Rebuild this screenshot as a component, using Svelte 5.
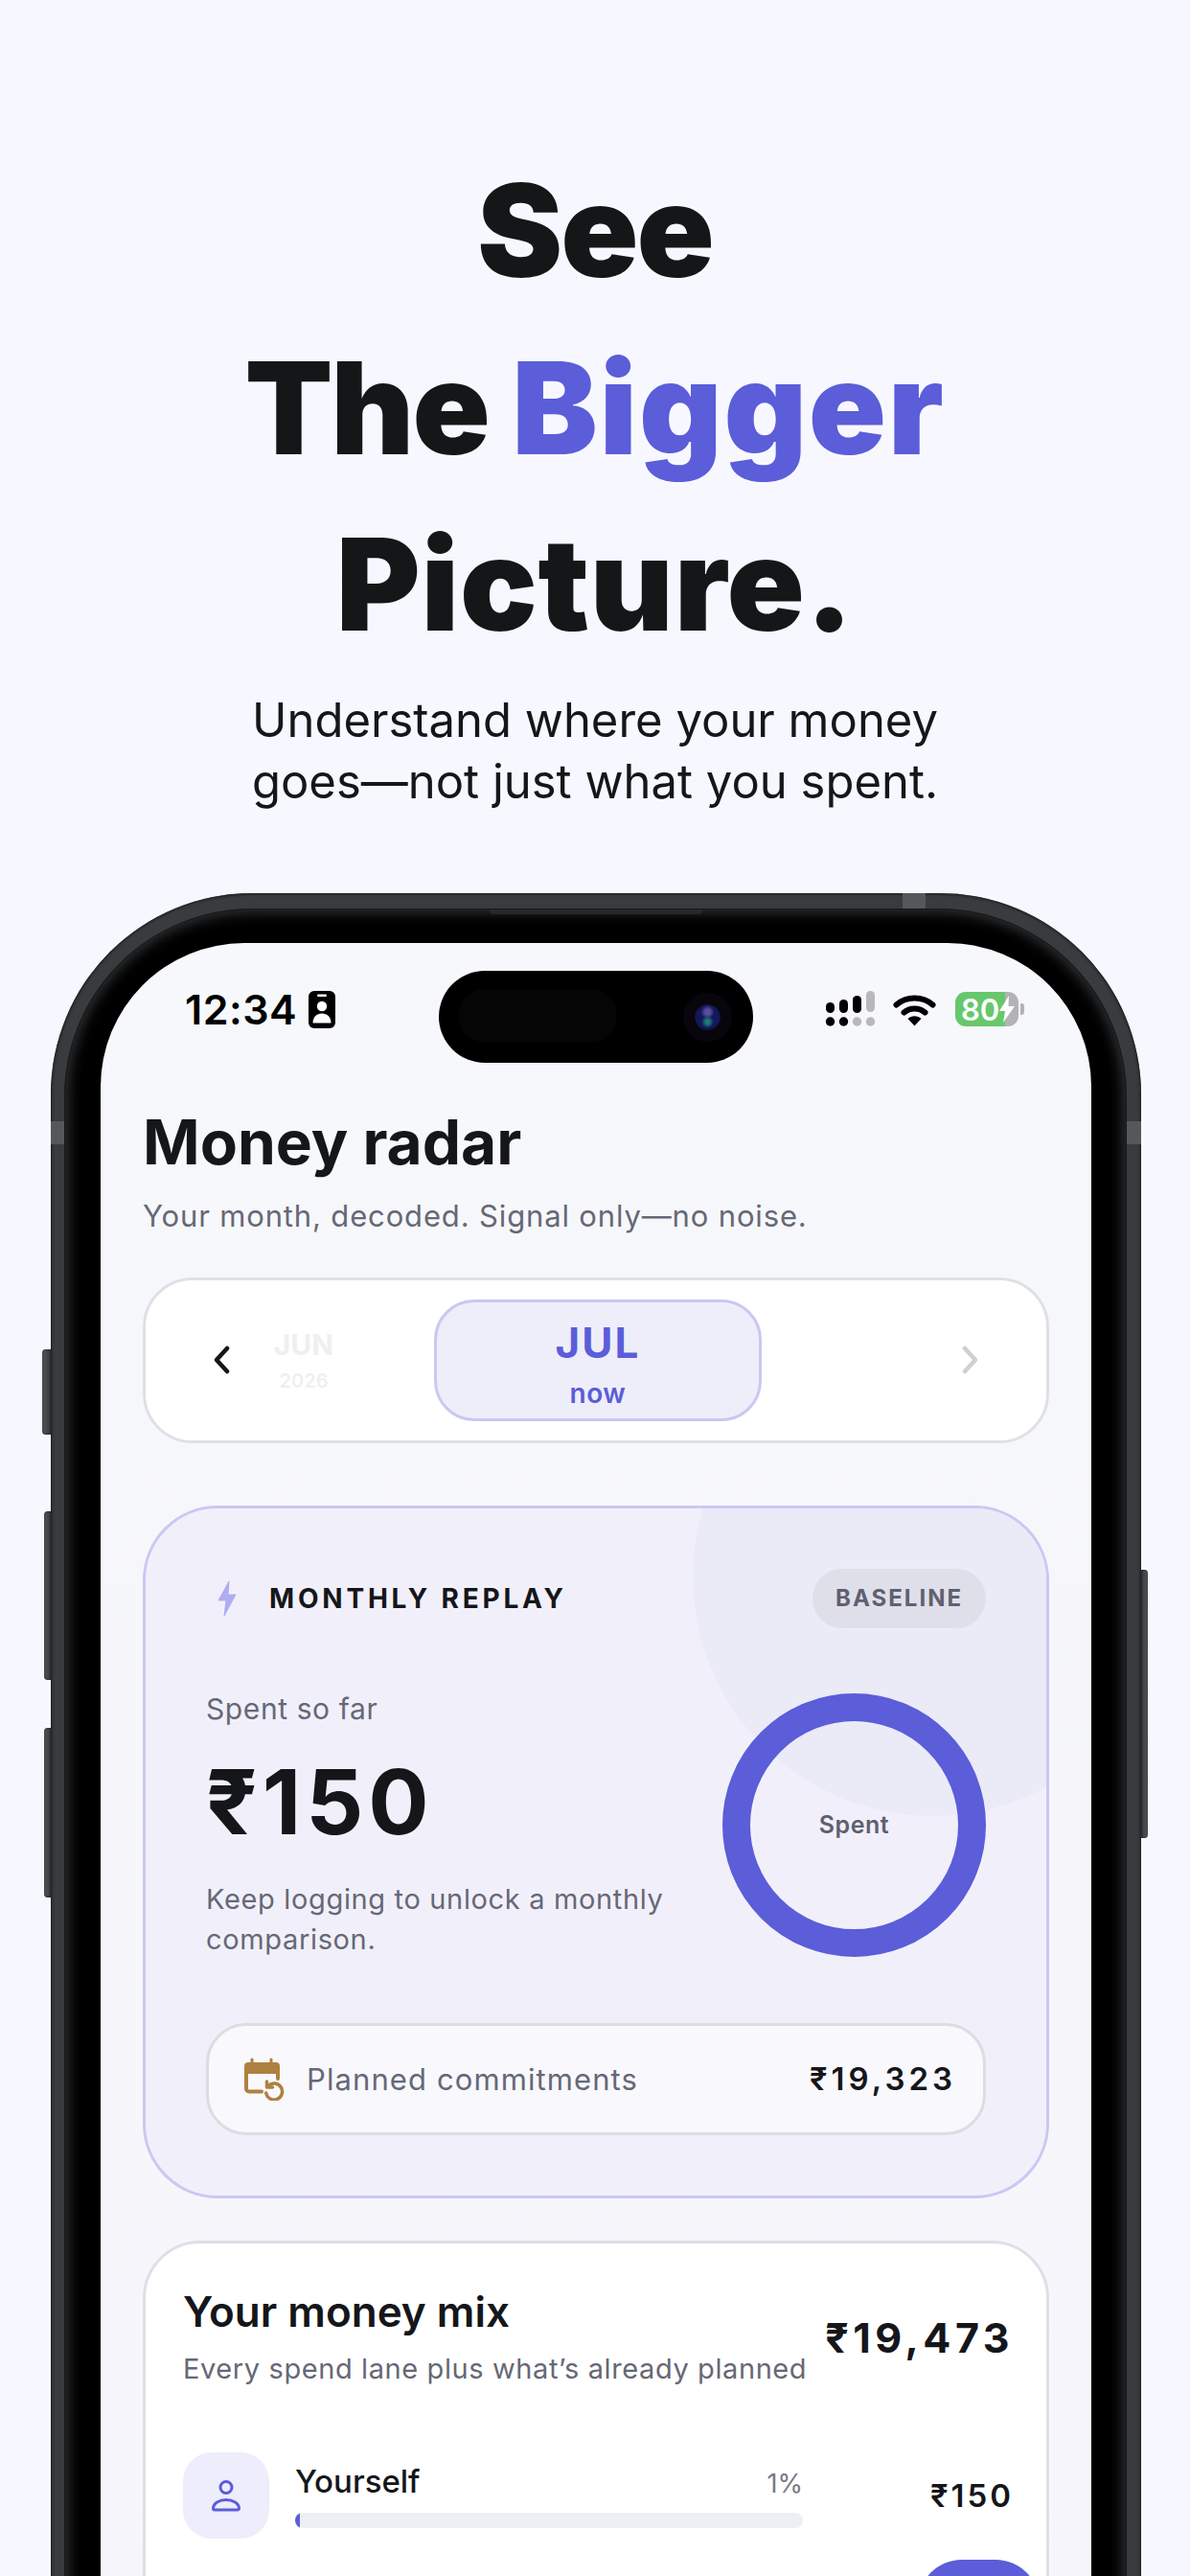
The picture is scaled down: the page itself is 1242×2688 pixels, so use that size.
<script lang="ts">
  const mix = [{ name: "Yourself", pct: 1, amount: "₹150" }];
</script>

<div class="page">
  <header class="hero">
    <h1>See<br />The <span class="accent">Bigger</span><br /><span class="last">Picture.</span></h1>
    <p>Understand where your money<br />goes—not just what you spent.</p>
  </header>

  <div class="phone">
    <span class="btn action"></span>
    <span class="btn vol-up"></span>
    <span class="btn vol-down"></span>
    <span class="btn power"></span>
    <span class="band band-l"></span>
    <span class="band band-r"></span>
    <span class="band-top"></span>
    <div class="bezel">
      <span class="speaker"></span>
      <div class="screen">
        <div class="island">
          <span class="island-sensor"></span>
          <span class="island-cam"></span>
        </div>

        <div class="status">
          <div class="status-left">
            <span class="time">12:34</span>
            <svg class="badge" viewBox="0 0 28 39" width="28" height="39" aria-hidden="true">
              <rect width="28" height="39" rx="6" fill="#000" />
              <rect x="9" y="3.500" width="10" height="2.400" rx="1.200" fill="#fff" />
              <circle cx="14" cy="16" r="5.200" fill="#fff" />
              <path d="M4.500 33.500c0-6.500 4.200-10 9.500-10s9.500 3.500 9.500 10z" fill="#fff" />
            </svg>
          </div>
          <div class="status-right">
            <svg width="55" height="38" viewBox="0 0 55 38" aria-hidden="true">
              <rect x="2" y="12" width="9" height="11" rx="4.500" />
              <rect x="16" y="9" width="9" height="14" rx="4.500" />
              <rect x="30" y="5" width="9" height="18" rx="4.500" />
              <rect x="44" y="0" width="9" height="22" rx="4.500" fill="#b8b8bc" />
              <circle cx="6.500" cy="32" r="4.700" />
              <circle cx="20.500" cy="32" r="4.700" />
              <circle cx="34.500" cy="32" r="4.700" fill="#b8b8bc" />
              <circle cx="48.500" cy="32" r="4.700" fill="#b8b8bc" />
            </svg>
            <svg class="wifi" width="45" height="35" viewBox="0 0 45 35" aria-hidden="true">
              <path d="M3.500 12.500C14 3 31 3 41.500 12.500" fill="none" stroke="#000" stroke-width="6" stroke-linecap="round" />
              <path d="M11.500 20.500C17.500 15 27.500 15 33.500 20.500" fill="none" stroke="#000" stroke-width="6" stroke-linecap="round" />
              <path d="M15.500 27c4-3.800 10-3.800 14 0l-7 7.500z" />
            </svg>
            <div class="battery">
              <div class="cell">
                <span>80</span>
                <svg width="16" height="28" viewBox="0 0 16 28" aria-hidden="true">
                  <path d="M10 0 0 16h6l-2 12L16 11H9.500z" fill="#fff" />
                </svg>
              </div>
              <span class="nub"></span>
            </div>
          </div>
        </div>

        <main class="content">
          <h2>Money radar</h2>
          <p class="lede">Your month, decoded. Signal only—no noise.</p>

          <div class="months">
            <svg class="chev" width="18" height="30" viewBox="0 0 18 30" aria-hidden="true">
              <path d="M15 3 4 15l11 12" fill="none" stroke="#15161a" stroke-width="4.500" stroke-linecap="round" stroke-linejoin="round" />
            </svg>
            <div class="month-prev">
              <span class="m">JUN</span>
              <span class="y">2026</span>
            </div>
            <div class="month-now">
              <span class="m">JUL</span>
              <span class="n">now</span>
            </div>
            <svg class="chev next" width="18" height="30" viewBox="0 0 18 30" aria-hidden="true">
              <path d="M3 3l11 12L3 27" fill="none" stroke="#cfd0d4" stroke-width="4.500" stroke-linecap="round" stroke-linejoin="round" />
            </svg>
          </div>

          <section class="replay">
            <span class="blob"></span>
            <div class="replay-head">
              <div class="replay-title">
                <svg width="22" height="38" viewBox="0 0 22 38" aria-hidden="true">
                  <path d="M13 1 2 21h8l-2 16 12-22h-8z" fill="#aeadf2" stroke="#aeadf2" stroke-width="1" stroke-linejoin="round" />
                </svg>
                <span>MONTHLY REPLAY</span>
              </div>
              <span class="pill">BASELINE</span>
            </div>
            <div class="replay-body">
              <div class="replay-copy">
                <div class="so-far">Spent so far</div>
                <div class="big">₹150</div>
                <p>Keep logging to unlock a monthly comparison.</p>
              </div>
              <div class="ring"><span>Spent</span></div>
            </div>
            <div class="planned">
              <svg width="42" height="45" viewBox="0 0 42 45" aria-hidden="true">
                <path d="M6.500 5V2a1.500 1.500 0 0 1 3 0v3h17V2a1.500 1.500 0 0 1 3 0v3H33a4 4 0 0 1 4 4v8H0V9a4 4 0 0 1 4-4z" fill="#ae8140" />
                <path d="M2 15v17.500a3 3 0 0 0 3 3h13M35 15v7" fill="none" stroke="#ae8140" stroke-width="4" stroke-linecap="round" />
                <path d="M25 29.500a8.500 8.500 0 1 1-2.300 7.500" fill="none" stroke="#ae8140" stroke-width="3.500" stroke-linecap="round" />
                <path d="M23.500 25v6h6" fill="none" stroke="#ae8140" stroke-width="3.500" stroke-linecap="round" stroke-linejoin="round" />
              </svg>
              <span class="planned-label">Planned commitments</span>
              <span class="planned-amount">₹19,323</span>
            </div>
          </section>

          <section class="mix">
            <div class="mix-head">
              <div>
                <h3>Your money mix</h3>
                <p>Every spend lane plus what’s already planned</p>
              </div>
              <span class="total">₹19,473</span>
            </div>
            {#each mix as row}
              <div class="lane">
                <div class="lane-icon">
                  <svg width="32" height="34" viewBox="0 0 32 34" aria-hidden="true">
                    <circle cx="16" cy="8.500" r="6" fill="none" stroke="#5b5dd9" stroke-width="3" />
                    <path d="M2.500 30.500C2.500 25 9 21.500 16 21.500s13.500 3.500 13.500 9a1.500 1.500 0 0 1-1.500 1.500H4a1.500 1.500 0 0 1-1.500-1.500z" fill="none" stroke="#5b5dd9" stroke-width="3" stroke-linejoin="round" />
                  </svg>
                </div>
                <div class="lane-main">
                  <div class="lane-top">
                    <span class="lane-name">{row.name}</span>
                    <span class="lane-pct">{row.pct}%</span>
                  </div>
                  <div class="track"><div class="fill" style="width: {row.pct}%"></div></div>
                </div>
                <span class="lane-amount">{row.amount}</span>
              </div>
            {/each}
            <span class="fab"></span>
          </section>
        </main>
      </div>
    </div>
  </div>
</div>

<style>
  :global(body) {
    margin: 0;
    background: #f7f8ff;
  }
  .page {
    width: 1242px;
    height: 2688px;
    overflow: hidden;
    background: #f7f8ff;
    font-family: Inter, "Noto Sans", sans-serif;
  }
  .hero {
    padding-top: 148px;
    text-align: center;
    color: #151618;
  }
  .hero h1 {
    margin: 0;
    font-size: 134px;
    line-height: 184.5px;
    font-weight: 900;
    letter-spacing: -2px;
  }
  .accent {
    color: #5b5dd9;
    letter-spacing: 1.7px;
  }
  .last {
    letter-spacing: 0.8px;
  }
  .hero p {
    margin: 18px 0 0;
    font-size: 49px;
    line-height: 64px;
    font-weight: 400;
  }

  .phone {
    position: relative;
    width: 1138px;
    height: 2100px;
    margin: 84px 0 0 53px;
    box-sizing: border-box;
    padding: 17px 16px 0 15px;
    border-radius: 210px;
    background: #393c3e;
    box-shadow: inset 0 0 3px 1px #17181a;
  }
  .bezel {
    position: relative;
    height: 100%;
    box-sizing: border-box;
    padding: 35px 36px 0 37px;
    border-radius: 195px;
    background: #000;
    box-shadow: 0 0 0 1px #17181a, inset 0 0 14px 3px rgba(95, 97, 100, 0.55);
  }
  .speaker {
    position: absolute;
    top: 0;
    left: 443px;
    width: 222px;
    height: 5px;
    border-radius: 0 0 4px 4px;
    background: #26282a;
  }
  .btn {
    position: absolute;
    right: 100%;
    border-radius: 4px 0 0 4px;
    background: linear-gradient(90deg, #55585a, #33363a);
    box-shadow: inset 0 0 2px #17181a;
  }
  .action { top: 476px; height: 89px; width: 9px; }
  .vol-up { top: 645px; height: 176px; width: 7px; }
  .vol-down { top: 871px; height: 177px; width: 7px; }
  .power {
    left: 100%;
    right: auto;
    top: 706px;
    height: 280px;
    width: 7px;
    border-radius: 0 4px 4px 0;
    background: linear-gradient(270deg, #55585a, #33363a);
  }
  .band {
    position: absolute;
    top: 238px;
    width: 15px;
    height: 24px;
    background: #54585a;
  }
  .band-l { left: 0; }
  .band-r { right: 0; }
  .band-top {
    position: absolute;
    top: 0;
    left: 889px;
    width: 24px;
    height: 17px;
    background: #54585a;
  }

  .screen {
    position: relative;
    height: 100%;
    border-radius: 150px 150px 0 0;
    background: linear-gradient(#f7f8fb, #f5f5fb);
    overflow: hidden;
  }
  .island {
    position: absolute;
    top: 29px;
    left: 353px;
    width: 328px;
    height: 96px;
    border-radius: 48px;
    background: #000;
  }
  .island-sensor {
    position: absolute;
    top: 19px;
    left: 20px;
    width: 166px;
    height: 56px;
    border-radius: 28px;
    background: #050505;
  }
  .island-cam {
    position: absolute;
    top: 35px;
    left: 267px;
    width: 27px;
    height: 27px;
    border-radius: 50%;
    background:
      radial-gradient(circle at 50% 30%, #55509a 0 12%, transparent 30%),
      radial-gradient(circle at 50% 68%, #1c7a78 0 10%, transparent 28%),
      radial-gradient(circle, #14185a 0 55%, #0a0a20 100%);
    box-shadow: 0 0 0 12px #08060c;
  }

  .status {
    display: flex;
    justify-content: space-between;
    align-items: center;
    height: 39px;
    padding: 50px 70px 0 88px;
  }
  .status-left,
  .status-right {
    display: flex;
    align-items: center;
  }
  .time {
    font-size: 43px;
    font-weight: 600;
    color: #000;
    letter-spacing: 0.5px;
  }
  .badge {
    margin-left: 12px;
  }
  .wifi {
    margin-left: 17px;
  }
  .battery {
    display: flex;
    align-items: center;
    margin-left: 20px;
  }
  .cell {
    display: flex;
    align-items: center;
    width: 66px;
    height: 36px;
    box-sizing: border-box;
    padding-left: 6px;
    border-radius: 11px;
    background: linear-gradient(90deg, #67c76c 79%, #b3b3b6 79%);
    color: #fff;
    font-size: 31px;
    font-weight: 600;
  }
  .nub {
    width: 4px;
    height: 12px;
    margin-left: 2px;
    border-radius: 0 3px 3px 0;
    background: #b3b3b6;
  }

  .content {
    padding: 83px 44px 0;
  }
  h2 {
    margin: 0;
    font-size: 64px;
    line-height: 72px;
    font-weight: 700;
    letter-spacing: 0;
    color: #15161a;
  }
  .lede {
    margin: 21px 0 0;
    font-size: 31px;
    line-height: 40px;
    letter-spacing: 0.85px;
    color: #666876;
  }

  .months {
    display: flex;
    align-items: center;
    height: 173px;
    margin-top: 44px;
    box-sizing: border-box;
    padding: 0 70px 0 70px;
    border: 3px solid #dfe0e6;
    border-radius: 52px;
    background: #fff;
  }
  .month-prev {
    display: flex;
    flex-direction: column;
    align-items: center;
    margin-left: 42px;
    width: 70px;
    color: #efeff1;
    font-weight: 700;
  }
  .month-prev .m {
    font-size: 30px;
    line-height: 36px;
  }
  .month-prev .y {
    margin-top: 7px;
    font-size: 20px;
    line-height: 26px;
    font-weight: 600;
  }
  .month-now {
    display: flex;
    flex-direction: column;
    align-items: center;
    box-sizing: border-box;
    width: 342px;
    height: 127px;
    margin-left: 101px;
    border: 3px solid #c8c8f2;
    border-radius: 42px;
    background: #eeeefa;
    color: #5b5dd9;
    font-weight: 700;
  }
  .month-now .m {
    margin-top: 16px;
    font-size: 44px;
    line-height: 52px;
    letter-spacing: 2px;
  }
  .month-now .n {
    margin-top: 10px;
    font-size: 28px;
    line-height: 34px;
    font-weight: 600;
    letter-spacing: 0.5px;
  }
  .chev.next {
    margin-left: auto;
  }

  .replay {
    position: relative;
    overflow: hidden;
    height: 723px;
    margin-top: 65px;
    box-sizing: border-box;
    padding: 63px 63px 0;
    border: 3px solid #c9c8f3;
    border-radius: 78px;
    background: #f1f0fa;
  }
  .blob {
    position: absolute;
    top: -179px;
    left: 571px;
    width: 500px;
    height: 500px;
    border-radius: 50%;
    background: #ebeaf7;
  }
  .replay-head {
    position: relative;
    display: flex;
    justify-content: space-between;
    align-items: center;
    height: 62px;
  }
  .replay-title {
    display: flex;
    align-items: center;
    gap: 33px;
    padding-left: 11px;
    font-size: 28px;
    font-weight: 700;
    letter-spacing: 3.800px;
    color: #15161a;
  }
  .pill {
    display: flex;
    align-items: center;
    height: 62px;
    padding: 0 24px;
    border-radius: 31px;
    background: #dfdfea;
    color: #5f6070;
    font-size: 24px;
    font-weight: 700;
    letter-spacing: 2px;
  }
  .replay-body {
    position: relative;
    display: flex;
    justify-content: space-between;
    align-items: flex-start;
    margin-top: 68px;
  }
  .replay-copy {
    width: 500px;
    margin-top: -2px;
  }
  .so-far {
    font-size: 30px;
    line-height: 36px;
    letter-spacing: 0.6px;
    color: #666876;
  }
  .big {
    margin-top: 23px;
    font-size: 94px;
    line-height: 112px;
    font-weight: 700;
    letter-spacing: 5px;
    color: #15161a;
  }
  .replay-copy p {
    margin: 25px 0 0;
    font-size: 29px;
    line-height: 42px;
    letter-spacing: 0.65px;
    color: #666876;
  }
  .ring {
    display: flex;
    align-items: center;
    justify-content: center;
    box-sizing: border-box;
    width: 275px;
    height: 275px;
    border: 29px solid #5b5dd9;
    border-radius: 50%;
    color: #5f6070;
    font-size: 25px;
    font-weight: 600;
    letter-spacing: 0.5px;
  }
  .planned {
    position: relative;
    display: flex;
    align-items: center;
    height: 117px;
    margin-top: 66px;
    box-sizing: border-box;
    padding: 0 28px 0 37px;
    border: 3px solid #dcdde3;
    border-radius: 42px;
    background: #f8f8fd;
  }
  .planned-label {
    margin-left: 23px;
    font-size: 31px;
    letter-spacing: 1.100px;
    color: #666876;
  }
  .planned-amount {
    margin-left: auto;
    font-size: 33px;
    font-weight: 600;
    letter-spacing: 4px;
    color: #15161a;
  }

  .mix {
    position: relative;
    height: 500px;
    margin-top: 44px;
    box-sizing: border-box;
    padding: 46px 34px 0 39px;
    border: 3px solid #dfe0e6;
    border-radius: 60px;
    background: #fff;
  }
  .mix-head {
    display: flex;
    justify-content: space-between;
    align-items: center;
  }
  h3 {
    margin: 0;
    font-size: 44px;
    line-height: 50px;
    font-weight: 600;
    color: #15161a;
  }
  .mix-head p {
    margin: 16px 0 0;
    font-size: 29px;
    line-height: 38px;
    letter-spacing: 0.6px;
    color: #666876;
  }
  .total {
    font-size: 43px;
    font-weight: 700;
    letter-spacing: 4.500px;
    color: #15161a;
  }
  .lane {
    display: flex;
    align-items: center;
    margin-top: 68px;
  }
  .lane-icon {
    display: flex;
    align-items: center;
    justify-content: center;
    flex: none;
    width: 90px;
    height: 90px;
    border-radius: 30px;
    background: #ededfb;
  }
  .lane-main {
    width: 530px;
    margin-left: 27px;
  }
  .lane-top {
    display: flex;
    justify-content: space-between;
    align-items: baseline;
  }
  .lane-name {
    font-size: 33px;
    font-weight: 500;
    color: #15161a;
  }
  .lane-pct {
    font-size: 27px;
    color: #777985;
  }
  .track {
    height: 16px;
    margin-top: 13px;
    border-radius: 8px;
    overflow: hidden;
    background: #eeeff4;
  }
  .fill {
    height: 100%;
    background: #5b5dd9;
  }
  .lane-amount {
    margin-left: auto;
    font-size: 33px;
    font-weight: 600;
    letter-spacing: 3px;
    color: #15161a;
  }
  .fab {
    position: absolute;
    top: 330px;
    left: 806px;
    width: 127px;
    height: 127px;
    border-radius: 46px;
    background: #5b5dd9;
  }
</style>
